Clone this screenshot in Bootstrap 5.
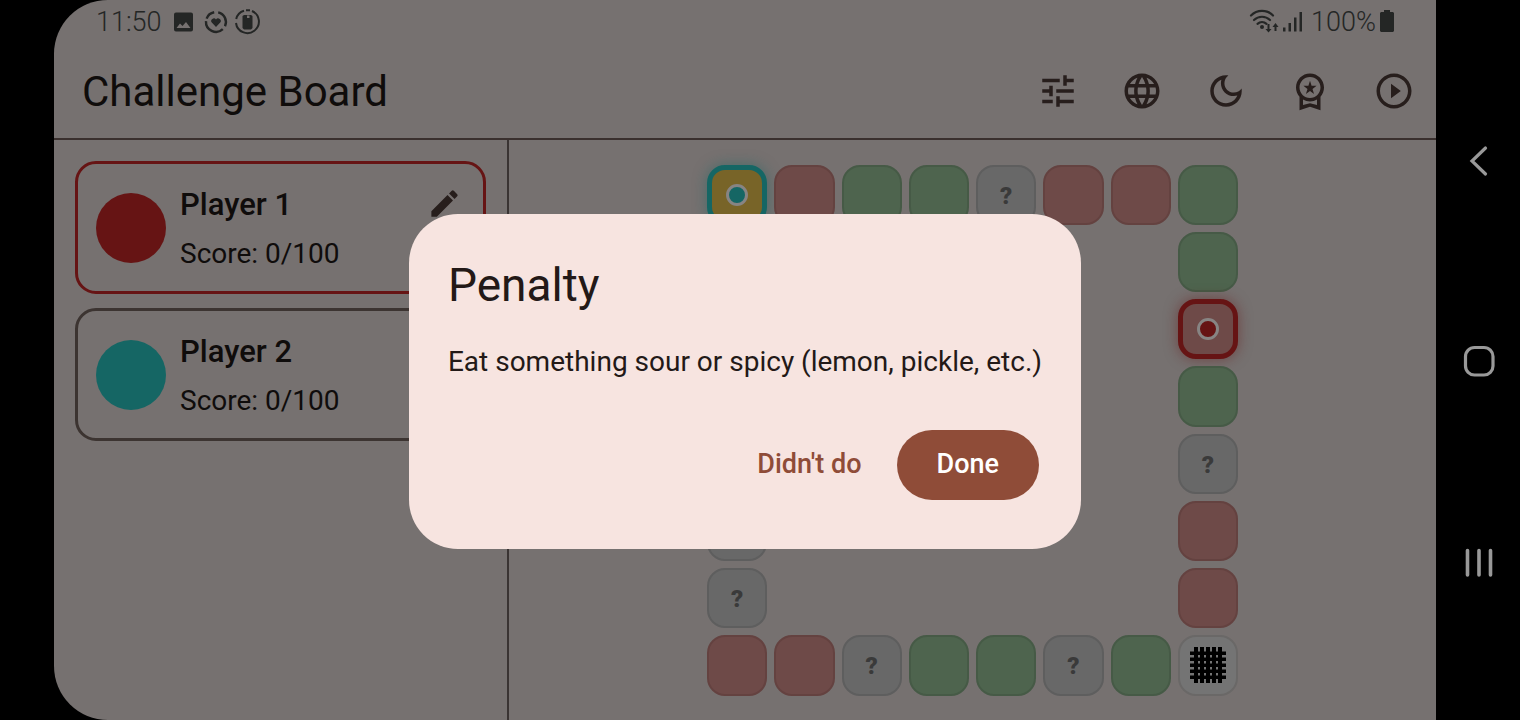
<!DOCTYPE html>
<html lang="en">
<head>
<meta charset="utf-8">
<meta name="viewport" content="width=device-width, initial-scale=1">
<title>Challenge Board</title>
<link href="https://cdn.jsdelivr.net/npm/bootstrap@5.3.0/dist/css/bootstrap.min.css" rel="stylesheet">
<style>
  :root { --surface: #767170; --ink: #0f0c0b; --icon: #271e1c; --p1: #661414; --p2: #156664; --accent: #8f4c38; }
  body { background: #000; color: var(--ink); font-family: Roboto, "Liberation Sans", sans-serif; }
  svg { display: block; fill: currentColor; }
  .phone { min-height: 100vh; padding-left: 54px; }
  .screen { background: var(--surface); border-radius: 54px 0 0 54px; overflow: hidden; }
  .status { height: 43px; padding: 1px 42px 0 42px; color: #242625; font-size: 27px; line-height: 42px; font-weight: 300; }
  .app-bar { height: 97px; padding: 0 21px 0 28px; border-bottom: 2px solid #3a302e; }
  .app-title { font-size: 42px; line-height: 50px; padding-top: 2px; font-weight: 400; }
  .icon-btn { color: var(--icon); background: none; border: 0; padding: 0; }
  .tools { gap: 42px; }
  .side { flex: 0 0 455px; padding: 21px; border-right: 2px solid #3a3433; gap: 14px; }
  .player { border: 3px solid #3c3431; border-radius: 21px; padding: 18px; gap: 14px; height: 133px; }
  .player.active { border-color: var(--p1); }
  .token { width: 70px; height: 70px; border-radius: 50%; background: var(--p2); }
  .active .token { background: var(--p1); }
  .player-name { font-size: 31px; line-height: 42px; font-weight: 500; padding-top: 4px; }
  .player-score { font-size: 28px; line-height: 42px; margin-top: 7px; }
  .player .icon-btn { align-self: flex-start; margin: 4px 3px 0 0; }
  .board { display: grid; grid-template-columns: repeat(8, minmax(0, 1fr)); grid-template-rows: repeat(8, minmax(0, 1fr)); gap: 7px; width: min(100%, calc(100vh - 189px)); aspect-ratio: 1; }
  .tile { display: flex; align-items: center; justify-content: center; border: 2px solid #5e5e5e; border-radius: 18px; background: #686868; color: #3a3a3a; font-size: 24px; line-height: 28px; padding-top: 2px; font-weight: 900; }
  .tile.penalty { background: #6e4a48; border-color: #644240; }
  .tile.bonus { background: #4e644e; border-color: #465a46; }
  .tile.start { background: #786428; }
  .tile.finish { background: #747474; border-color: #6a6867; color: #000; padding: 0; }
  .tile.at-p1 { border: 5px solid var(--p1); box-shadow: 0 0 14px rgba(102, 20, 20, .5); padding: 0; }
  .tile.at-p2 { border: 5px solid var(--p2); box-shadow: 0 0 14px rgba(21, 102, 100, .5); padding: 0; }
  .pawn { width: 22px; height: 22px; border: 3px solid #878483; border-radius: 50%; }
  .at-p1 .pawn { background: var(--p1); }
  .at-p2 .pawn { background: var(--p2); }
  .left { grid-column: 1; }
  .right { grid-column: 8; }
  .overlay { inset: 42px 0 0 0; }
  .dialog { background: #f7e4e0; color: #231917; border-radius: 49px; padding: 43px 39px 49px; }
  .dialog-title { font-size: 46px; line-height: 56px; font-weight: 400; margin-bottom: 28px; }
  .dialog-text { font-size: 28px; line-height: 42px; margin-bottom: 47px; }
  .dialog .btn { font-size: 27px; line-height: 40px; font-weight: 500; border: 0; border-radius: 35px; padding: 14px 21px 16px; color: var(--accent); }
  .dialog .btn-done { background: var(--accent); color: #fff; padding: 14px 40px 16px; }
  .dialog-actions { gap: 14px; padding-right: 3px; }
  .sys-nav { flex: 0 0 84px; color: #999; padding: 61px 0 58px 2px; }
</style>
</head>
<body>
<div class="phone d-flex">
  <div class="screen position-relative flex-fill d-flex flex-column">
    <div class="status d-flex align-items-center justify-content-between">
      <div class="d-flex align-items-center">
        <span>11:50</span>
        <svg class="ms-2" width="28" height="28" viewBox="0 0 28 28"><path fill-rule="evenodd" d="M6 4.500h15a2 2 0 0 1 2 2v15a2 2 0 0 1-2 2H6a2 2 0 0 1-2-2v-15a2 2 0 0 1 2-2zm.5 15.500h14l-4.500-6-3.500 4-2.500-2.500z"/></svg>
        <svg class="ms-1" width="28" height="28" viewBox="0 0 28 28"><path d="M14 19l-4.200-4.400a2.600 2.600 0 0 1 4.200-3.200 2.600 2.600 0 0 1 4.200 3.200z"/><g fill="none" stroke="currentColor" stroke-width="2.400"><path d="M12.200 4.200A10 10 0 0 0 4.600 10.600"/><path d="M4 13.200a10 10 0 0 0 16.800 8"/><path d="M16.200 4.300A10 10 0 0 1 23 18.200"/></g></svg>
        <svg class="ms-1" width="28" height="28" viewBox="0 0 28 28"><path fill-rule="evenodd" d="M10 7h7l1.500 1v12L17 21.500h-7L8.500 20V8zM13 7.500v2.500h2.500V7.500z"/><g fill="none" stroke="currentColor" stroke-width="2"><path d="M10 2.800A11.500 11.500 0 0 0 2.200 11"/><path d="M2 15A11.500 11.500 0 1 0 18 3"/><path d="M12 2.200h4"/></g></svg>
      </div>
      <div class="d-flex align-items-center">
        <svg width="30" height="28" viewBox="0 0 30 28"><g fill="none" stroke="currentColor" stroke-width="2.200" stroke-linecap="round"><path d="M2 7.500a15.500 15.500 0 0 1 22 0"/><path d="M5 12a11.500 11.500 0 0 1 16 0"/><path d="M8.500 15.800a7 7 0 0 1 9 0"/></g><circle cx="13" cy="19" r="2"/><path d="M18.500 16h2v5h2l-3 3.500-3-3.500h2zM25.500 23h2v-4h2l-3-4-3 4h2z"/></svg>
        <svg class="ms-1" width="20" height="28" viewBox="0 0 20 28"><path d="M0 19.500h2.500v4H0zM5.500 15H8v8.500H5.500zM11 9.500h2.500v14H11zM16.500 4H19v19.500h-2.500z"/></svg>
        <span class="ms-2">100%</span>
        <svg class="ms-1" width="14" height="28" viewBox="0 0 14 28"><path d="M4 2h6v2h3l1 1v18l-1 1H1l-1-1V5l1-1h3z"/></svg>
      </div>
    </div>

    <header class="app-bar d-flex align-items-center justify-content-between">
      <h1 class="app-title m-0">Challenge Board</h1>
      <div class="tools d-flex">
        <button class="icon-btn" type="button" aria-label="Settings"><svg width="42" height="42" viewBox="0 0 24 24"><path d="M3 17v2h6v-2H3zM3 5v2h10V5H3zm10 16v-2h8v-2h-8v-2h-2v6h2zM7 9v2H3v2h4v2h2V9H7zm14 4v-2H11v2h10zm-6-4h2V7h4V5h-4V3h-2v6z"/></svg></button>
        <button class="icon-btn" type="button" aria-label="Language"><svg width="42" height="42" viewBox="0 0 24 24"><path d="M11.990 2C6.470 2 2 6.480 2 12s4.470 10 9.990 10C17.520 22 22 17.520 22 12S17.520 2 11.990 2zm6.930 6h-2.950c-.32-1.250-.78-2.450-1.380-3.560 1.840.63 3.370 1.910 4.330 3.560zM12 4.040c.83 1.200 1.480 2.530 1.910 3.960h-3.820c.43-1.430 1.080-2.760 1.910-3.960zM4.260 14C4.100 13.360 4 12.690 4 12s.1-1.360.26-2h3.380c-.08.66-.14 1.320-.14 2s.06 1.340.14 2H4.260zm.82 2h2.950c.32 1.250.78 2.450 1.380 3.560-1.840-.63-3.370-1.900-4.330-3.560zm2.950-8H5.080c.96-1.660 2.490-2.930 4.330-3.560C8.810 5.550 8.350 6.750 8.030 8zM12 19.960c-.83-1.200-1.480-2.530-1.910-3.960h3.820c-.43 1.430-1.080 2.760-1.910 3.960zM14.340 14H9.660c-.09-.66-.16-1.320-.16-2s.07-1.350.16-2h4.680c.09.65.16 1.320.16 2s-.07 1.340-.16 2zm.25 5.560c.6-1.110 1.060-2.310 1.380-3.560h2.950c-.96 1.650-2.490 2.930-4.330 3.560zM16.360 14c.08-.66.14-1.320.14-2s-.06-1.340-.14-2h3.380c.16.64.26 1.310.26 2s-.1 1.360-.26 2h-3.380z"/></svg></button>
        <button class="icon-btn" type="button" aria-label="Dark mode"><svg width="42" height="42" viewBox="0 0 24 24"><path d="M9.370 5.510C9.190 6.150 9.100 6.820 9.100 7.500c0 4.080 3.320 7.400 7.400 7.400.68 0 1.350-.09 1.990-.27C17.450 17.190 14.930 19 12 19c-3.860 0-7-3.140-7-7 0-2.930 1.810-5.450 4.370-6.490zM12 3c-4.970 0-9 4.030-9 9s4.030 9 9 9 9-4.030 9-9c0-.46-.04-.92-.1-1.360-.98 1.370-2.580 2.260-4.400 2.260-2.980 0-5.400-2.420-5.400-5.400 0-1.810.89-3.420 2.260-4.400-.44-.06-.9-.1-1.360-.1z"/></svg></button>
        <button class="icon-btn" type="button" aria-label="Premium"><svg width="42" height="42" viewBox="0 0 24 24"><path d="M9.680 13.690 12 11.930l2.310 1.760-.88-2.850L15.750 9h-2.840L12 6.190 11.090 9H8.250l2.310 1.840-.88 2.850zM20 10c0-4.420-3.580-8-8-8s-8 3.580-8 8c0 2.030.76 3.870 2 5.280V23l6-2 6 2v-7.720c1.240-1.410 2-3.250 2-5.280zm-8-6c3.310 0 6 2.690 6 6s-2.690 6-6 6-6-2.690-6-6 2.690-6 6-6zm0 15-4 1.020v-3.100c1.180.68 2.540 1.080 4 1.080s2.820-.4 4-1.080v3.100L12 19z"/></svg></button>
        <button class="icon-btn" type="button" aria-label="Play"><svg width="42" height="42" viewBox="0 0 24 24"><path d="M10.300 16.200l5.600-4.200-5.600-4.200v8.400zM12 2C6.480 2 2 6.480 2 12s4.480 10 10 10 10-4.480 10-10S17.520 2 12 2zm0 18c-4.410 0-8-3.590-8-8s3.590-8 8-8 8 3.590 8 8-3.590 8-8 8z"/></svg></button>
      </div>
    </header>

    <div class="flex-fill d-flex">
      <aside class="side d-flex flex-column">
        <section class="player active d-flex align-items-center">
          <div class="token flex-shrink-0"></div>
          <div class="flex-fill">
            <div class="player-name">Player 1</div>
            <div class="player-score">Score: 0/100</div>
          </div>
          <button class="icon-btn" type="button" aria-label="Edit Player 1"><svg width="35" height="35" viewBox="0 0 24 24"><path d="M3 17.250V21h3.750L17.810 9.940l-3.750-3.750L3 17.250zM20.710 7.040a1 1 0 0 0 0-1.410l-2.340-2.340a1 1 0 0 0-1.410 0l-1.830 1.830 3.750 3.750 1.830-1.830z"/></svg></button>
        </section>
        <section class="player d-flex align-items-center">
          <div class="token flex-shrink-0"></div>
          <div class="flex-fill">
            <div class="player-name">Player 2</div>
            <div class="player-score">Score: 0/100</div>
          </div>
        </section>
      </aside>

      <main class="flex-fill d-flex align-items-center justify-content-center">
        <div class="board">
          <div class="tile start at-p2"><span class="pawn"></span></div>
          <div class="tile penalty"></div>
          <div class="tile bonus"></div>
          <div class="tile bonus"></div>
          <div class="tile">?</div>
          <div class="tile penalty"></div>
          <div class="tile penalty"></div>
          <div class="tile bonus"></div>

          <div class="tile bonus right"></div>
          <div class="tile penalty right at-p1"><span class="pawn"></span></div>
          <div class="tile bonus right"></div>
          <div class="tile right">?</div>
          <div class="tile left"></div>
          <div class="tile penalty right"></div>
          <div class="tile left">?</div>
          <div class="tile penalty right"></div>

          <div class="tile penalty"></div>
          <div class="tile penalty"></div>
          <div class="tile">?</div>
          <div class="tile bonus"></div>
          <div class="tile bonus"></div>
          <div class="tile">?</div>
          <div class="tile bonus"></div>
          <div class="tile finish"><svg width="36" height="36" viewBox="0 0 36 36"><path d="M4 0h4v36H4zM10 0h4v36h-4zM16 0h4v36h-4zM22 0h4v36h-4zM28 0h4v36h-4z"/><path d="M0 4.500h36V8H0zM0 10.500h36V14H0zM0 16.500h36V20H0zM0 22.500h36V26H0zM0 28.500h36V32H0z"/></svg></div>
        </div>
      </main>
    </div>

    <div class="overlay position-absolute d-flex align-items-center justify-content-center">
      <div class="dialog" role="dialog" aria-labelledby="dialogTitle">
        <h2 class="dialog-title" id="dialogTitle">Penalty</h2>
        <p class="dialog-text">Eat something sour or spicy (lemon, pickle, etc.)</p>
        <div class="dialog-actions d-flex justify-content-end">
          <button class="btn" type="button">Didn't do</button>
          <button class="btn btn-done" type="button">Done</button>
        </div>
      </div>
    </div>
  </div>

  <nav class="sys-nav d-flex flex-column align-items-center justify-content-around" aria-label="System">
    <button class="icon-btn text-reset" type="button" aria-label="Back"><svg width="36" height="36" viewBox="0 0 36 36"><path d="M24.500 5L11 18l13.500 13" fill="none" stroke="currentColor" stroke-width="3.200" stroke-linecap="round"/></svg></button>
    <button class="icon-btn text-reset" type="button" aria-label="Home"><svg width="36" height="36" viewBox="0 0 36 36"><rect x="4.500" y="4.500" width="27.500" height="27.500" rx="9" fill="none" stroke="currentColor" stroke-width="3.200"/></svg></button>
    <button class="icon-btn text-reset" type="button" aria-label="Recent apps"><svg width="36" height="36" viewBox="0 0 36 36"><path d="M6.500 6.500v24.500M18 6.500v24.500M29.500 6.500v24.500" fill="none" stroke="currentColor" stroke-width="3.600" stroke-linecap="round"/></svg></button>
  </nav>
</div>
<script src="https://cdn.jsdelivr.net/npm/bootstrap@5.3.0/dist/js/bootstrap.bundle.min.js"></script>
</body>
</html>
